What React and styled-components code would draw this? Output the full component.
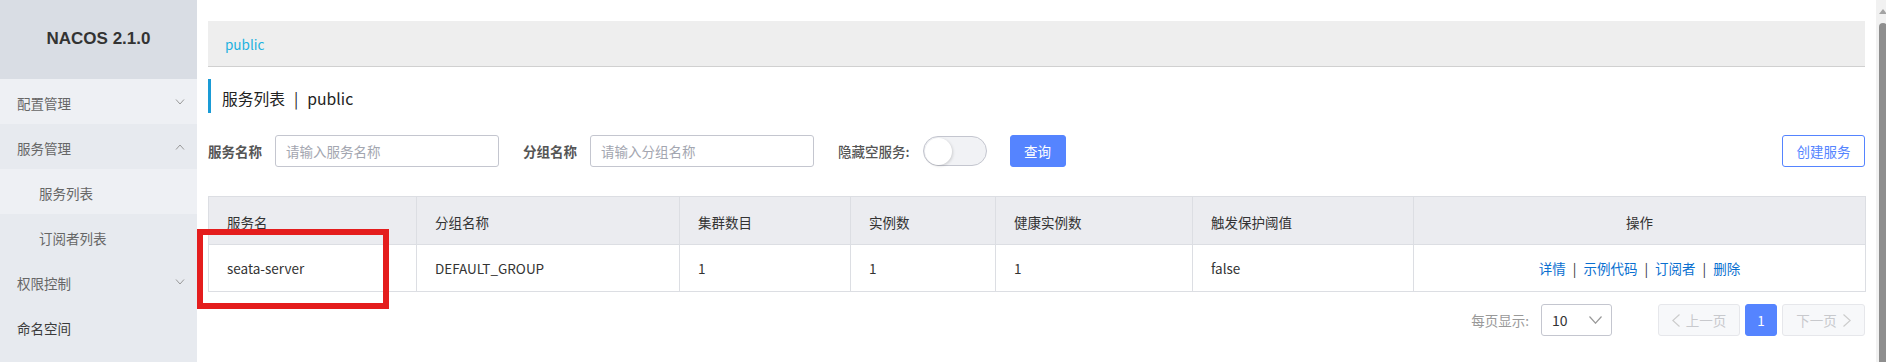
import React from "react";
import styled, { createGlobalStyle } from "styled-components";

const Global = createGlobalStyle`
  html, body { margin: 0; padding: 0; background: #fff; }
  body { font-family: "Noto Sans CJK SC", "Noto Sans", sans-serif; font-size: 13.5px; color: #333; }
  * { box-sizing: border-box; }
`;

const Root = styled.div`
  position: relative;
  display: flex;
  width: 1886px;
  height: 362px;
  overflow: hidden;
`;

const Sidebar = styled.aside`
  width: 197px;
  flex: none;
  background: #e7eaef;
  display: flex;
  flex-direction: column;
`;

const Logo = styled.div`
  height: 79px;
  background: #d9dde4;
  display: flex;
  align-items: center;
  justify-content: center;
  font-family: "Liberation Sans", Arial, sans-serif;
  font-weight: bold;
  font-size: 17px;
  color: #333;
  padding-bottom: 2px;
`;

const MenuItem = styled.div`
  height: 45px;
  display: flex;
  align-items: center;
  justify-content: space-between;
  padding: 2px 12px 0 ${(p) => (p.$sub ? 39 : 17)}px;
  background: ${(p) => (p.$light ? "#eef0f4" : "transparent")};
  color: ${(p) => (p.$dark ? "#3a3a3a" : "#666")};
  font-size: 13.5px;
`;

const Chevron = ({ up }) => (
  <svg width="10" height="6" viewBox="0 0 10 6" style={{ marginTop: -2 }}>
    <polyline
      points={up ? "1,5.5 5,1 9,5.5" : "1,0.5 5,5 9,0.5"}
      fill="none"
      stroke="#999"
      strokeWidth="1"
    />
  </svg>
);

const Main = styled.main`
  flex: 1;
  min-width: 0;
  padding: 21px 11px 0;
  background: #fff;
`;

const Breadcrumb = styled.div`
  height: 46px;
  background: #eeeeee;
  border-bottom: 1px solid #d0d0d0;
  display: flex;
  align-items: center;
  padding: 0 17px;
  color: #1fb2e0;
  font-size: 13.5px;
`;

const Title = styled.h2`
  margin: 12px 0 0;
  height: 34px;
  border-left: 3px solid #1a9bd6;
  padding: 4px 0 0 11px;
  display: flex;
  align-items: center;
  font-weight: normal;
  font-size: 15.75px;
  color: #222;
`;

const Sep = styled.span`
  margin: 0 9px;
`;

const FilterBar = styled.div`
  margin-top: 22px;
  height: 32px;
  display: flex;
  align-items: center;
`;

const Label = styled.label`
  font-size: 13.5px;
  font-weight: ${(p) => (p.$bold ? "bold" : "500")};
  color: #555;
  margin-right: 13px;
`;

const Input = styled.input`
  width: 224px;
  height: 32px;
  border: 1px solid #c4c6cf;
  border-radius: 3px;
  padding: 0 10px;
  font-family: inherit;
  font-size: 13.5px;
  margin-right: 24px;
  outline: none;
  &::placeholder { color: #a3a6b0; }
`;

const Switch = styled.div`
  width: 64px;
  height: 30px;
  border: 1px solid #c4c6cf;
  border-radius: 15px;
  background: #f1f2f5;
  display: flex;
  align-items: center;
  padding-left: 1px;
`;

const Knob = styled.div`
  width: 27px;
  height: 27px;
  border-radius: 50%;
  background: #fff;
  box-shadow: 1px 1px 3px rgba(0, 0, 0, 0.15);
`;

const Button = styled.button`
  height: 32px;
  width: ${(p) => p.$w}px;
  margin-left: ${(p) => p.$ml || "0"};
  border-radius: 3px;
  border: 1px solid #5584ff;
  background: ${(p) => (p.$primary ? "#5584ff" : "#fff")};
  color: ${(p) => (p.$primary ? "#fff" : "#5584ff")};
  font-family: inherit;
  font-size: 13.5px;
  padding: 0;
`;

const Table = styled.table`
  margin-top: 29px;
  width: 1657px;
  table-layout: fixed;
  border-collapse: collapse;
  font-size: 13.5px;
`;

const Th = styled.th`
  height: 48px;
  background: #ebecf0;
  border: 1px solid #dcdee3;
  font-weight: normal;
  color: #333;
  text-align: ${(p) => (p.$center ? "center" : "left")};
  padding: 2px 18px 0;
`;

const Td = styled.td`
  height: 47px;
  border: 1px solid #dcdee3;
  color: #333;
  text-align: ${(p) => (p.$center ? "center" : "left")};
  padding: 0 18px;
`;

const Link = styled.a`
  color: #0a6fd0;
  text-decoration: none;
`;

const LinkSep = styled.span`
  color: #333;
  margin: 0 7px;
`;

const Pager = styled.div`
  margin-top: 12px;
  display: flex;
  align-items: center;
  justify-content: flex-end;
`;

const PagerLabel = styled.span`
  color: #999;
  margin-right: 12px;
`;

const Select = styled.div`
  width: 71px;
  height: 32px;
  border: 1px solid #c4c6cf;
  border-radius: 3px;
  display: flex;
  align-items: center;
  justify-content: space-between;
  padding: 0 9px 0 10px;
  color: #333;
  font-size: 14px;
  margin-right: 46px;
`;

const PageBtn = styled.div`
  height: 32px;
  width: ${(p) => p.$w}px;
  margin-left: ${(p) => p.$ml || 0}px;
  border-radius: 3px;
  border: 1px solid ${(p) => (p.$active ? "#5584ff" : "#e6e7eb")};
  background: ${(p) => (p.$active ? "#5584ff" : "#f7f8fa")};
  color: ${(p) => (p.$active ? "#fff" : "#c8c9cd")};
  display: flex;
  align-items: center;
  justify-content: center;
  gap: 6px;
  font-size: 13.5px;
`;

const ScrollTrack = styled.div`
  width: 10px;
  flex: none;
  background: #f1f1f1;
  display: flex;
  flex-direction: column;
  padding-left: 3px;
`;

const ScrollArrow = styled.div`
  width: 0;
  height: 0;
  margin-top: 9px;
  border-left: 4px solid transparent;
  border-right: 4px solid transparent;
  border-bottom: 5px solid #a3a3a3;
`;

const ScrollThumb = styled.div`
  flex: 1;
  margin-top: 9px;
  width: 8px;
  background: #8e8e8e;
  border-radius: 4px 4px 0 0;
`;

const Highlight = styled.div`
  position: absolute;
  left: 197px;
  top: 229px;
  width: 192px;
  height: 80px;
  border: 6px solid #e41d1d;
  pointer-events: none;
`;

const Arrow = ({ dir, color = "#ccc", w = 8, h = 13 }) => (
  <svg width={w} height={h} viewBox={`0 0 ${w} ${h}`}>
    <polyline
      points={
        dir === "left"
          ? `${w - 0.5},0.5 0.8,${h / 2} ${w - 0.5},${h - 0.5}`
          : dir === "right"
          ? `0.5,0.5 ${w - 0.8},${h / 2} 0.5,${h - 0.5}`
          : `0.5,0.5 ${w / 2},${h - 0.8} ${w - 0.5},0.5`
      }
      fill="none"
      stroke={color}
      strokeWidth="1.2"
    />
  </svg>
);

const columns = [
  { title: "服务名", w: 208 },
  { title: "分组名称", w: 263 },
  { title: "集群数目", w: 171 },
  { title: "实例数", w: 145 },
  { title: "健康实例数", w: 197 },
  { title: "触发保护阈值", w: 221 },
  { title: "操作", w: 452, center: true },
];

const row = ["seata-server", "DEFAULT_GROUP", "1", "1", "1", "false"];
const actions = ["详情", "示例代码", "订阅者", "删除"];

export default function App() {
  return (
    <>
      <Global />
      <Root>
        <Sidebar>
          <Logo>NACOS 2.1.0</Logo>
          <MenuItem $light>
            配置管理 <Chevron />
          </MenuItem>
          <MenuItem>
            服务管理 <Chevron up />
          </MenuItem>
          <MenuItem $light $sub>
            服务列表
          </MenuItem>
          <MenuItem $sub>订阅者列表</MenuItem>
          <MenuItem>
            权限控制 <Chevron />
          </MenuItem>
          <MenuItem $dark>命名空间</MenuItem>
        </Sidebar>
        <Main>
          <Breadcrumb>public</Breadcrumb>
          <Title>
            服务列表<Sep>|</Sep>public
          </Title>
          <FilterBar>
            <Label $bold>服务名称</Label>
            <Input placeholder="请输入服务名称" />
            <Label $bold>分组名称</Label>
            <Input placeholder="请输入分组名称" />
            <Label>隐藏空服务:</Label>
            <Switch>
              <Knob />
            </Switch>
            <Button $primary $w={56} $ml="23px">
              查询
            </Button>
            <Button $w={83} $ml="auto">
              创建服务
            </Button>
          </FilterBar>
          <Table>
            <colgroup>
              {columns.map((c) => (
                <col key={c.title} style={{ width: c.w }} />
              ))}
            </colgroup>
            <thead>
              <tr>
                {columns.map((c) => (
                  <Th key={c.title} $center={c.center}>
                    {c.title}
                  </Th>
                ))}
              </tr>
            </thead>
            <tbody>
              <tr>
                {row.map((v, i) => (
                  <Td key={i}>{v}</Td>
                ))}
                <Td $center>
                  {actions.map((a, i) => (
                    <React.Fragment key={a}>
                      {i > 0 && <LinkSep>|</LinkSep>}
                      <Link href="#">{a}</Link>
                    </React.Fragment>
                  ))}
                </Td>
              </tr>
            </tbody>
          </Table>
          <Pager>
            <PagerLabel>每页显示:</PagerLabel>
            <Select>
              10 <Arrow dir="down" color="#999" w={13} h={8} />
            </Select>
            <PageBtn $w={82}>
              <Arrow dir="left" /> 上一页
            </PageBtn>
            <PageBtn $w={32} $ml={5} $active>
              1
            </PageBtn>
            <PageBtn $w={83} $ml={5}>
              下一页 <Arrow dir="right" />
            </PageBtn>
          </Pager>
        </Main>
        <ScrollTrack>
          <ScrollArrow />
          <ScrollThumb />
        </ScrollTrack>
        <Highlight />
      </Root>
    </>
  );
}
